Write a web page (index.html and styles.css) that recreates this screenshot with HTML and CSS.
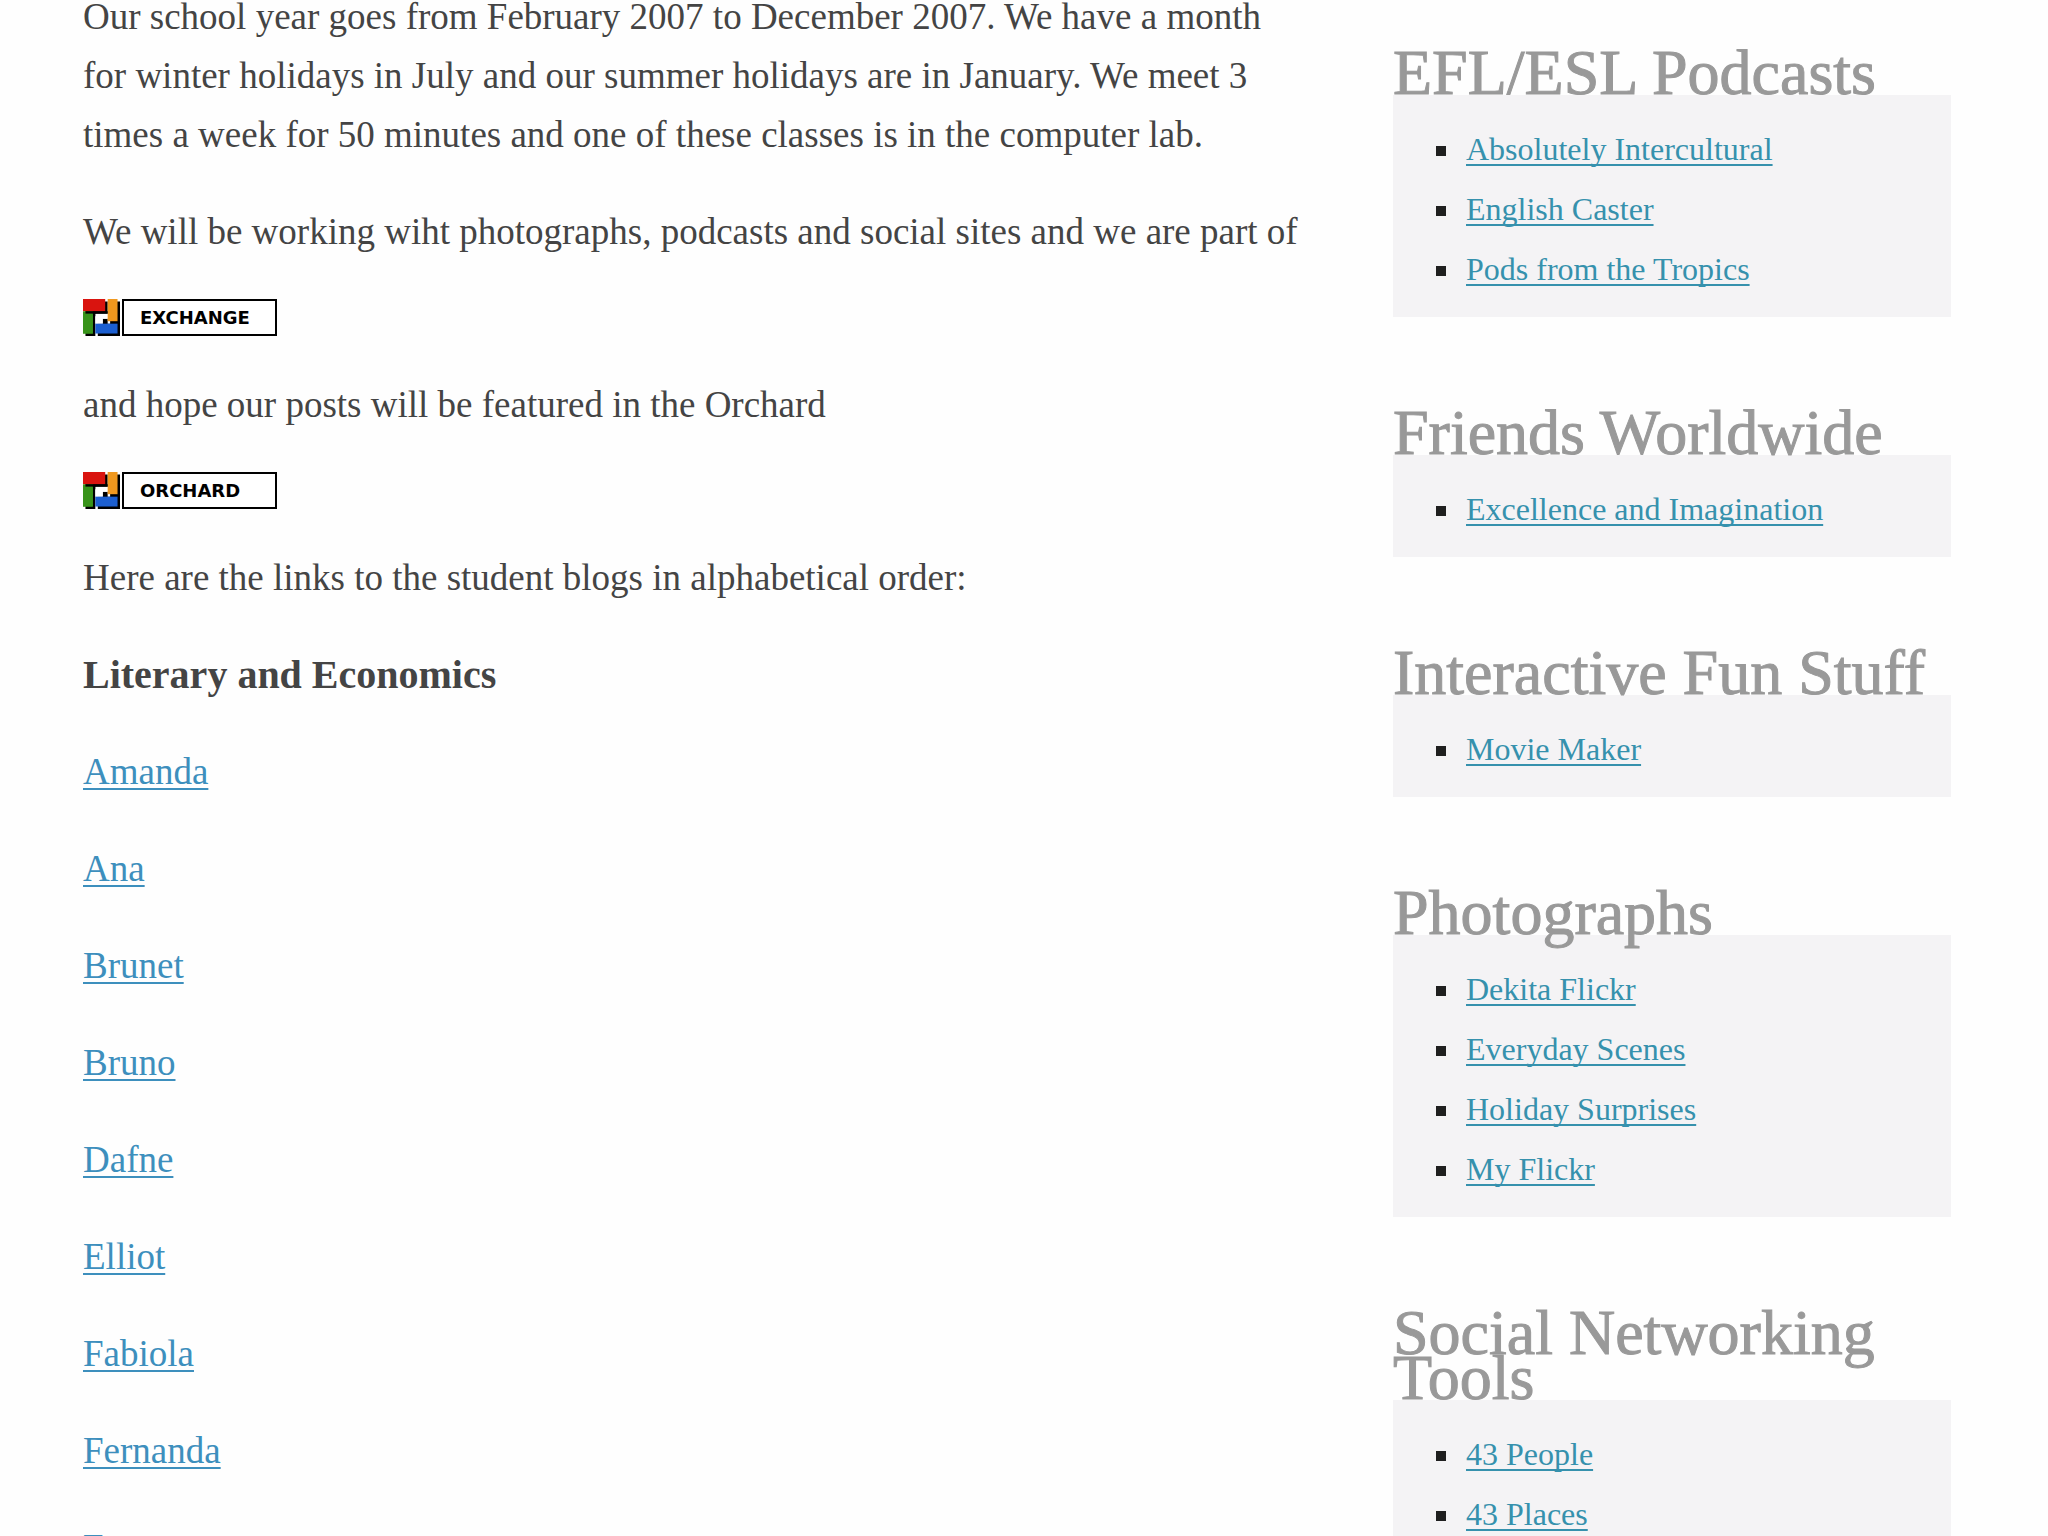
FILE: index.html
```html
<!DOCTYPE html>
<html lang="en">
<head>
<meta charset="utf-8">
<title>Class blog</title>
<link rel="stylesheet" href="styles.css">
</head>
<body>
<svg class="defs" aria-hidden="true">
  <symbol id="pinwheel" viewBox="0 0 15 15">
    <path d="M1 1h9v5H5v9H1zM11 1h4v9h-4zM8 8h2v2h5v5H6v-5h2z" fill="#000"/>
    <path d="M5 7h3v3H5zM5 6h5v2H5z" fill="#fff"/>
    <path d="M0 0h9v5H0z" fill="#d9140f"/>
    <path d="M10 0h4v9h-4z" fill="#f0981e"/>
    <path d="M0 5h4v9H0z" fill="#38931a"/>
    <path d="M5 10h9v4H5z" fill="#1c5fd0"/>
    <path d="M1 5h9v1H5v1H4V6H1z" fill="#000"/>
    <path d="M0 6h4v8H0z" fill="#38931a"/>
  </symbol>
</svg>
<div class="page">
  <main class="post">
    <p>Our school year goes from February 2007 to December 2007. We have a month for winter holidays in July and our summer holidays are in January. We meet 3 times a week for 50 minutes and one of these classes is in the computer lab.</p>
    <p>We will be working wiht photographs, podcasts and social sites and we are part of</p>
    <p class="badge"><svg class="badge-icon" aria-hidden="true"><use href="#pinwheel"/></svg><span class="badge-label">EXCHANGE</span></p>
    <p>and hope our posts will be featured in the Orchard</p>
    <p class="badge"><svg class="badge-icon" aria-hidden="true"><use href="#pinwheel"/></svg><span class="badge-label">ORCHARD</span></p>
    <p>Here are the links to the student blogs in alphabetical order:</p>
    <p><strong>Literary and Economics</strong></p>
    <p><a href="#">Amanda</a></p>
    <p><a href="#">Ana</a></p>
    <p><a href="#">Brunet</a></p>
    <p><a href="#">Bruno</a></p>
    <p><a href="#">Dafne</a></p>
    <p><a href="#">Elliot</a></p>
    <p><a href="#">Fabiola</a></p>
    <p><a href="#">Fernanda</a></p>
    <p><a href="#">Franco</a></p>
  </main>
  <aside class="sidebar">
    <section>
      <h2>EFL/ESL Podcasts</h2>
      <ul>
        <li><a href="#">Absolutely Intercultural</a></li>
        <li><a href="#">English Caster</a></li>
        <li><a href="#">Pods from the Tropics</a></li>
      </ul>
    </section>
    <section>
      <h2>Friends Worldwide</h2>
      <ul>
        <li><a href="#">Excellence and Imagination</a></li>
      </ul>
    </section>
    <section>
      <h2>Interactive Fun Stuff</h2>
      <ul>
        <li><a href="#">Movie Maker</a></li>
      </ul>
    </section>
    <section>
      <h2>Photographs</h2>
      <ul>
        <li><a href="#">Dekita Flickr</a></li>
        <li><a href="#">Everyday Scenes</a></li>
        <li><a href="#">Holiday Surprises</a></li>
        <li><a href="#">My Flickr</a></li>
      </ul>
    </section>
    <section>
      <h2>Social Networking Tools</h2>
      <ul>
        <li><a href="#">43 People</a></li>
        <li><a href="#">43 Places</a></li>
      </ul>
    </section>
  </aside>
</div>
</body>
</html>
```
FILE: styles.css
```css
body {
  margin: 0;
  background: #fefefe;
  color: #444;
  font-family: Georgia, "Liberation Serif", serif;
  overflow: hidden;
}

.defs {
  position: absolute;
  width: 0;
  height: 0;
}

.page {
  display: grid;
  grid-template-columns: minmax(0, 1fr) 558px;
  gap: 88px;
  padding: 0 97px 0 83px;
  height: 100vh;
}

.post {
  margin-top: -13px;
  font-size: 37px;
  line-height: 59px;
}

.post p {
  margin: 0 0 38px;
}

.post strong {
  display: block;
  font-size: 40px;
}

.post a {
  color: #3d8fbd;
}

a {
  text-decoration-thickness: 2px;
  text-underline-offset: 4px;
  text-decoration-skip-ink: none;
}

.post .badge {
  display: flex;
  gap: 2px;
  height: 38px;
}

.badge-icon {
  width: 37px;
  height: 37px;
}

.badge-label {
  box-sizing: border-box;
  width: 155px;
  height: 37px;
  padding-left: 16px;
  border: 2px solid #000;
  background: #fff;
  color: #000;
  font: bold 18px/33px "DejaVu Sans", sans-serif;
}

.sidebar {
  padding-top: 50px;
}

.sidebar section {
  margin-bottom: 93px;
}

.sidebar h2 {
  position: relative;
  margin: 0;
  color: #999;
  font-size: 64px;
  font-weight: normal;
  line-height: 45px;
  -webkit-text-stroke: 1px #999;
}

.sidebar ul {
  margin: 0;
  padding: 24px 0 18px 73px;
  background: #f4f3f5;
  list-style: none;
}

.sidebar li {
  display: flex;
  align-items: center;
  height: 60px;
  font-size: 32px;
}

.sidebar li::before {
  content: "";
  width: 10px;
  height: 10px;
  margin: 4px 20px 0 -30px;
  background: #1f1f1f;
}

.sidebar a {
  color: #3691ad;
}
```
